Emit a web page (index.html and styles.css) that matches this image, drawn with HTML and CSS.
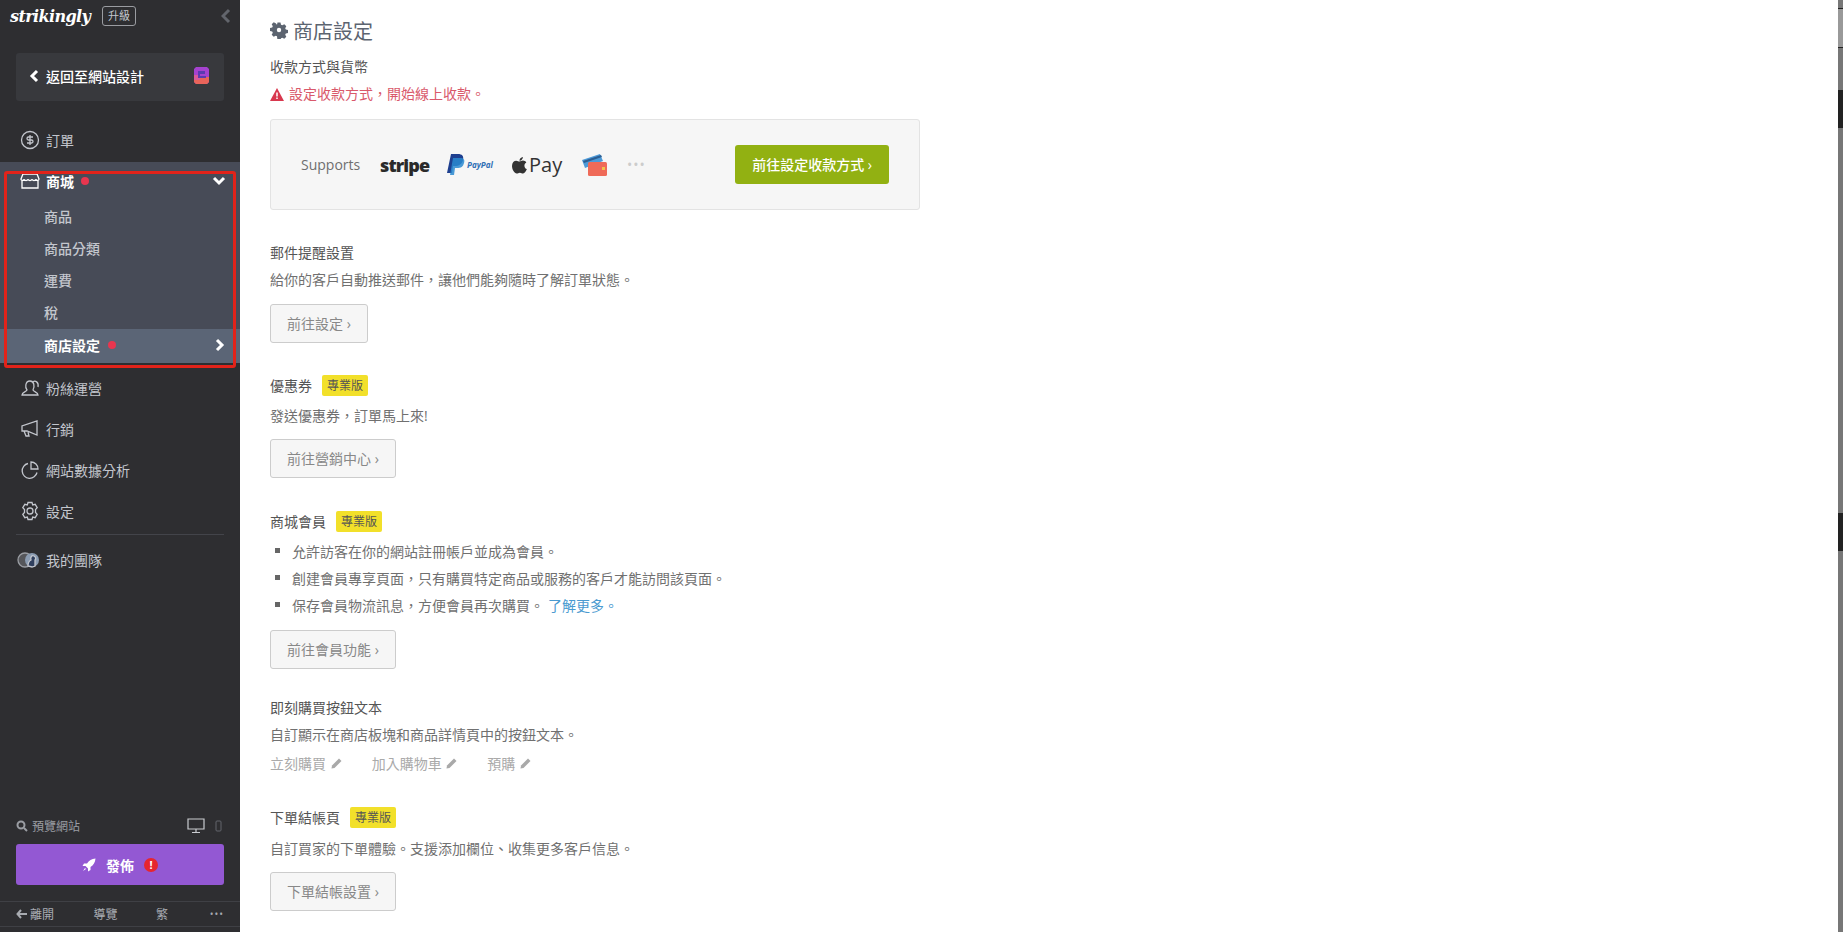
FILE: index.html
```html
<!DOCTYPE html>
<html lang="zh-Hant">
<head>
    <meta charset="UTF-8">
    <meta name="viewport" content="width=device-width, initial-scale=1.0">
    <title>商店設定</title>
    <link rel="stylesheet" href="styles.css">
</head>
<body>
    <div class="app">
        <aside class="sidebar">
            <div class="brand">
                <span class="logo">strikingly</span>
                <span class="upgrade">升級</span>
                <svg class="collapse" width="10" height="16" viewBox="0 0 10 16"><path d="M8 2L2 8l6 6" fill="none" stroke="#62656c" stroke-width="3"/></svg>
            </div>
            <div class="back">
                <svg width="10" height="14" viewBox="0 0 10 14"><path d="M8 2L3 7l5 5" fill="none" stroke="#fff" stroke-width="3"/></svg>
                <span class="back-label">返回至網站設計</span>
                <svg class="site-icon" width="15" height="17" viewBox="0 0 15 17"><path d="M0 2l2-2h11l2 2v13l-2 2H2l-2-2z" fill="#a542cf"/><path d="M0 10h15v5l-2 2H2l-2-2z" fill="#e8645a"/><path d="M0 8h6v5H0z" fill="#d8589a"/><path d="M4 4h7v3H6v2h6v2H4z" fill="#5a3bb0"/></svg>
            </div>

            <div class="nav-row first">
                <svg class="nav-icon" viewBox="0 0 20 20"><circle cx="10" cy="10" r="8.5"/><path d="M13 7H8.500a1.500 1.500 0 0 0 0 3h3a1.500 1.500 0 0 1 0 3H7M10 5v10"/></svg>
                <span>訂單</span>
            </div>

            <div class="store">
                <div class="highlight"></div>
                <div class="store-head">
                    <svg class="nav-icon" viewBox="0 0 20 20"><path d="M3 3h14l2 5c0 2-3 2-3 0 0 2-4 2-4 0 0 2-4 2-4 0 0 2-4 2-4 0 0 2-3 2-3 0zM2 10v7h16v-7"/></svg>
                    <span>商城</span>
                    <span class="dot"></span>
                    <svg class="chev" width="14" height="10" viewBox="0 0 14 10"><path d="M2 2l5 5 5-5" fill="none" stroke="#fff" stroke-width="3"/></svg>
                </div>
                <div class="sub-row">商品</div>
                <div class="sub-row">商品分類</div>
                <div class="sub-row">運費</div>
                <div class="sub-row">稅</div>
                <div class="sub-row current">
                    <span>商店設定</span>
                    <span class="dot"></span>
                    <svg class="chev" width="10" height="14" viewBox="0 0 10 14"><path d="M2 2l5 5-5 5" fill="none" stroke="#fff" stroke-width="3"/></svg>
                </div>
            </div>

            <div class="nav-list">
                <div class="nav-row">
                    <svg class="nav-icon" viewBox="0 0 20 20"><path d="M2 17c0-3 4-3 5-5-2-2-2-9 3-9 4 0 5 5 3 9 1 2 5 2 5 5zM13 4c2-2 6 0 5 5"/></svg>
                    <span>粉絲運營</span>
                </div>
                <div class="nav-row">
                    <svg class="nav-icon" viewBox="0 0 20 20"><path d="M17 2v14L7 12H2V7l15-5zM4 12l2 5h3l-1-4"/></svg>
                    <span>行銷</span>
                </div>
                <div class="nav-row">
                    <svg class="nav-icon" viewBox="0 0 20 20"><path d="M8 3.500a7.500 7.500 0 1 0 9 9M11 2a7 7 0 0 1 7 7h-7z"/></svg>
                    <span>網站數據分析</span>
                </div>
                <div class="nav-row">
                    <svg class="nav-icon" viewBox="0 0 20 20"><path d="M8 1.500h4l.7 2.500 2.500-.7 2 3.400L15.500 8.500v3l1.700 1.800-2 3.400-2.500-.7-.7 2.500H8l-.7-2.500-2.500.7-2-3.400 1.700-1.800v-3L2.800 6.700l2-3.400 2.500.7z"/><circle cx="10" cy="10" r="3"/></svg>
                    <span>設定</span>
                </div>
                <div class="nav-divider"></div>
                <div class="nav-row">
                    <svg class="nav-icon team" viewBox="0 0 24 20"><circle cx="8" cy="10" r="7" fill="#55565a" stroke="#9a9da3"/><circle cx="15" cy="10" r="7" fill="#8b9cb2" stroke="none"/><path d="M11 16c0-4 1-5 3-6-1-3 1-5 3-4 2 1 2 3 1 4v6l-3 1z" fill="#2f3f5e"/></svg>
                    <span>我的團隊</span>
                </div>
            </div>

            <div class="side-bottom">
                <div class="preview">
                    <svg width="12" height="12" viewBox="0 0 12 12"><circle cx="5" cy="5" r="3.500" fill="none" stroke="#9a9da3" stroke-width="2"/><path d="M8 8l3 3" stroke="#9a9da3" stroke-width="2"/></svg>
                    <span class="preview-label">預覽網站</span>
                    <svg class="desktop" width="18" height="16" viewBox="0 0 18 16"><path d="M1 1h16v10H1zM9 11v3M5 14.500h8" fill="none" stroke="#c9cbd0" stroke-width="1.200"/></svg>
                    <svg width="7" height="12" viewBox="0 0 7 12"><rect x="1" y="1" width="5" height="10" rx="1" fill="none" stroke="#62656c"/></svg>
                </div>
                <div class="publish">
                    <svg width="14" height="14" viewBox="0 0 14 14"><path d="M13.500.5c-4 .3-6.500 2-8.500 5H2L.5 8h3l2.500 2.500v3L8.500 12V9c3-2 4.700-4.500 5-8.500zM3 10l-2 3 3-2z" fill="#fff"/></svg>
                    <span>發佈</span>
                    <span class="alert">!</span>
                </div>
                <div class="side-footer">
                    <span class="leave"><svg width="11" height="10" viewBox="0 0 11 10"><path d="M5 1L1.500 5 5 9M2 5h9" fill="none" stroke="#a8abb1" stroke-width="2"/></svg>離開</span>
                    <span class="guide">導覽</span>
                    <span class="lang">繁</span>
                    <span class="more">•••</span>
                </div>
            </div>
        </aside>

        <main class="content">
            <h1 class="page-title">
                <svg width="18" height="18" viewBox="0 0 18 18"><path d="M7.500 1h3l.5 2.200 1.300.6 2-1.100 2 2-1.100 2 .6 1.300 2.200.5v3l-2.200.5-.6 1.300 1.100 2-2 2-2-1.100-1.300.6-.5 2.200h-3L7 14.800l-1.300-.6-2 1.100-2-2 1.100-2-.6-1.300L0 9.500v-3l2.200-.5.6-1.300-1.100-2 2-2 2 1.100L7 3.200z" fill="#5c6470" transform="translate(0 .5)"/><circle cx="9" cy="9" r="2.200" fill="#fff"/></svg>
                商店設定
            </h1>

            <section class="block first">
                <h2 class="block-head">收款方式與貨幣</h2>
                <p class="warn">
                    <svg width="14" height="13" viewBox="0 0 14 13"><path d="M7 0l7 13H0z" fill="#d8384e"/><path d="M7 4.500v4M7 9.500v1.500" stroke="#fff" stroke-width="1.500"/></svg>
                    設定收款方式，開始線上收款。
                </p>
                <div class="pay-panel">
                    <span class="supports">Supports</span>
                    <span class="stripe">stripe</span>
                    <span class="paypal">
                        <svg width="18" height="24" viewBox="0 0 18 24"><path d="M4 1h7c4 0 6 2 5 6-1 4-4 6-8 6H6l-1 7H0z" fill="#1e3f8f"/><path d="M6 5h7c4 0 5 2 4 5-1 4-3 5-7 5H8l-1 7H3z" fill="#2a8ad0" opacity=".85"/></svg>
                        <span class="paypal-word">PayPal</span>
                    </span>
                    <span class="applepay">
                        <svg width="15" height="18" viewBox="0 0 15 18"><path d="M11 1c0 2-2 4-3.500 3.700C7.300 3 9 1.200 11 1zM7.500 5.500c1 0 2-.9 3.500-.9 1.300 0 2.600.7 3.300 1.800-2.800 1.700-2.300 5.600.6 6.700-.8 2-2.300 4.400-3.800 4.400-1.200 0-1.700-.8-3.200-.8s-2 .8-3.200.8C2.500 17.500 0 13.500 0 10c0-3.400 2.100-5.300 4.200-5.300 1.400 0 2.400.8 3.300.8z" fill="#333"/></svg>
                        <span>Pay</span>
                    </span>
                    <svg class="wallet" width="26" height="24" viewBox="0 0 26 24"><path d="M1 7l18-6 3 7-18 7z" fill="#4d9ad8"/><path d="M2 8l18-6 1 2-18 6z" fill="#2c5f94"/><rect x="7" y="9" width="19" height="14" rx="1.500" fill="#ef6a58"/><rect x="21" y="14" width="3" height="3" fill="#f2c34a"/></svg>
                    <span class="pay-more">•••</span>
                    <a class="btn-green">前往設定收款方式 ›</a>
                </div>
            </section>

            <section class="block second">
                <h2 class="block-head">郵件提醒設置</h2>
                <p class="desc roomy">給你的客戶自動推送郵件，讓他們能夠隨時了解訂單狀態。</p>
                <a class="btn">前往設定 ›</a>
            </section>

            <section class="block">
                <h2 class="block-head with-badge">優惠券 <span class="pro">專業版</span></h2>
                <p class="desc">發送優惠券，訂單馬上來!</p>
                <a class="btn">前往營銷中心 ›</a>
            </section>

            <section class="block member">
                <h2 class="block-head with-badge">商城會員 <span class="pro">專業版</span></h2>
                <ul class="perks">
                    <li>允許訪客在你的網站註冊帳戶並成為會員。</li>
                    <li>創建會員專享頁面，只有購買特定商品或服務的客戶才能訪問該頁面。</li>
                    <li>保存會員物流訊息，方便會員再次購買。 <a class="more-link">了解更多。</a></li>
                </ul>
                <a class="btn">前往會員功能 ›</a>
            </section>

            <section class="block tight">
                <h2 class="block-head">即刻購買按鈕文本</h2>
                <p class="desc short">自訂顯示在商店板塊和商品詳情頁中的按鈕文本。</p>
                <div class="labels">
                    <span class="label-item">立刻購買 <svg width="11" height="11" viewBox="0 0 11 11"><path d="M8 .5L10.500 3 3.500 10 .5 10.500 1 7.500z" fill="#a9a9a9"/></svg></span>
                    <span class="label-item">加入購物車 <svg width="11" height="11" viewBox="0 0 11 11"><path d="M8 .5L10.500 3 3.500 10 .5 10.500 1 7.500z" fill="#a9a9a9"/></svg></span>
                    <span class="label-item">預購 <svg width="11" height="11" viewBox="0 0 11 11"><path d="M8 .5L10.500 3 3.500 10 .5 10.500 1 7.500z" fill="#a9a9a9"/></svg></span>
                </div>
            </section>

            <section class="block">
                <h2 class="block-head with-badge wide-gap">下單結帳頁 <span class="pro">專業版</span></h2>
                <p class="desc">自訂買家的下單體驗。支援添加欄位、收集更多客戶信息。</p>
                <a class="btn">下單結帳設置 ›</a>
            </section>
        </main>

        <div class="scrollbar">
            <div class="sb-top"></div>
            <div class="sb-mark"></div>
            <div class="sb-mark second"></div>
        </div>
    </div>
</body>
</html>
```

FILE: styles.css
```css
html, body {
    margin: 0;
    padding: 0;
    height: 100%;
    overflow: hidden;
}
body {
    font-family: "Open Sans", "Noto Sans CJK TC", sans-serif;
    font-size: 14px;
    color: #707070;
    background-color: white;
}
.app {
    display: flex;
    height: 932px;
}

/* sidebar */
.sidebar {
    width: 240px;
    flex: none;
    display: flex;
    flex-direction: column;
    background-color: #2e2e31;
    color: #c3c6cd;
}
.brand {
    display: flex;
    align-items: center;
    height: 30px;
    padding: 1px 9px 0 10px;
}
.logo {
    font-family: "DejaVu Serif", serif;
    font-style: italic;
    font-weight: bold;
    font-size: 16px;
    letter-spacing: -0.6px;
    color: white;
    width: 92px;
}
.upgrade {
    border: 1px solid #9a9ca1;
    border-radius: 3px;
    font-size: 11px;
    line-height: 18px;
    padding: 0 5px;
    color: #c3c6cd;
}
.collapse {
    margin-left: auto;
}
.back {
    display: flex;
    align-items: center;
    box-sizing: border-box;
    height: 48px;
    margin: 22px 16px 18px;
    padding: 0 15px 3px 13px;
    background-color: #38393d;
    border-radius: 3px;
    color: white;
    font-weight: 500;
}
.back-label {
    margin-left: 7px;
}
.site-icon {
    margin-left: auto;
}
.nav-row {
    display: flex;
    align-items: center;
    box-sizing: border-box;
    height: 41px;
    padding: 0 20px 2px;
}
.nav-row.first {
    height: 43px;
}
.nav-icon {
    width: 20px;
    height: 20px;
    margin-right: 6px;
    fill: none;
    stroke: #c3c6cd;
    stroke-width: 1.3;
    flex: none;
}
.nav-icon.team {
    width: 24px;
    margin: 0 5px 0 -3px;
}
.store {
    position: relative;
    background-color: #474b57;
    height: 201px;
}
.highlight {
    position: absolute;
    top: 9px;
    left: 4px;
    width: 226px;
    height: 191px;
    border: 3px solid #e2231a;
    border-radius: 3px;
}
.store-head {
    display: flex;
    align-items: center;
    box-sizing: border-box;
    height: 39px;
    padding: 0 14px 2px 20px;
    color: white;
    font-weight: 700;
}
.store-head .nav-icon {
    stroke: white;
}
.sub-row {
    display: flex;
    align-items: center;
    box-sizing: border-box;
    height: 32px;
    padding: 0 15px 2px 44px;
    font-weight: 500;
}
.sub-row.current {
    height: 34px;
    background-color: #5b6576;
    color: white;
    font-weight: 700;
}
.dot {
    width: 8px;
    height: 8px;
    border-radius: 50%;
    background-color: #e8364f;
    margin-left: 7px;
}
.sub-row .dot {
    margin-left: 8px;
}
.chev {
    margin-left: auto;
}
.nav-list {
    padding-top: 5px;
}
.nav-divider {
    height: 1px;
    margin: 2px 16px 5px;
    background-color: #43444a;
}
.side-bottom {
    margin-top: auto;
}
.preview {
    display: flex;
    align-items: center;
    gap: 4px;
    height: 20px;
    padding: 0 18px 0 16px;
    color: #9a9da3;
    font-size: 12px;
}
.preview-label {
    margin-right: auto;
}
.desktop {
    margin-right: 6px;
}
.publish {
    display: flex;
    align-items: center;
    justify-content: center;
    gap: 10px;
    height: 41px;
    margin: 8px 16px 16px;
    border-radius: 3px;
    background-color: #9358d3;
    color: white;
    font-weight: 700;
}
.alert {
    width: 14px;
    height: 14px;
    border-radius: 50%;
    background-color: #e6252f;
    font-size: 11px;
    line-height: 14px;
    text-align: center;
}
.side-footer {
    display: flex;
    align-items: center;
    height: 24px;
    margin-bottom: 5px;
    padding: 0 16px;
    border-top: 1px solid #3f4045;
    border-bottom: 1px solid #3f4045;
    font-size: 12px;
    color: #a8abb1;
}
.leave {
    display: flex;
    align-items: center;
    gap: 3px;
    width: 78px;
}
.guide {
    width: 63px;
}
.lang {
    width: 54px;
}
.more {
    font-size: 10px;
    letter-spacing: 1px;
}

/* main */
.content {
    flex: 1;
    padding: 17px 0 0 30px;
}
.page-title {
    display: flex;
    align-items: center;
    gap: 5px;
    margin: 0;
    height: 26px;
    font-size: 20px;
    font-weight: 400;
    color: #5c6470;
}
.block {
    margin-top: 32px;
}
.block.first {
    margin-top: 14px;
}
.block.second,
.block.member {
    margin-top: 33px;
}
.block.tight {
    margin-top: 29px;
    padding-bottom: 1px;
}
.block-head {
    display: flex;
    align-items: center;
    margin: 0 0 7px;
    min-height: 20px;
    font-size: 14px;
    line-height: 20px;
    font-weight: 400;
    color: #555;
}
.block-head.with-badge {
    margin-bottom: 10px;
}
.block-head.wide-gap {
    margin-bottom: 11px;
}
.pro {
    margin-left: 10px;
    padding: 0 5px;
    background-color: #f2e02a;
    border-radius: 2px;
    font-size: 12px;
    line-height: 21px;
    color: #555;
}
.warn {
    display: flex;
    align-items: center;
    gap: 5px;
    margin: 0 0 15px;
    line-height: 20px;
    color: #d9596b;
}
.desc {
    margin: 0 0 13px;
    line-height: 20px;
}
.desc.roomy {
    margin-bottom: 14px;
}
.desc.short {
    margin-bottom: 9px;
}
.pay-panel {
    display: flex;
    align-items: center;
    width: 588px;
    height: 89px;
    padding: 0 30px;
    background-color: #f6f6f6;
    border: 1px solid #e3e3e3;
    border-radius: 3px;
}
.supports {
    width: 79px;
    color: #6f6f6f;
}
.stripe {
    width: 67px;
    font-size: 18px;
    font-weight: 800;
    letter-spacing: -0.9px;
    color: #2a2a2a;
}
.paypal {
    display: flex;
    align-items: center;
    gap: 2px;
    width: 65px;
}
.paypal-word {
    font-size: 8px;
    font-weight: 700;
    font-style: italic;
    color: #2f6fb5;
}
.applepay {
    display: flex;
    align-items: center;
    gap: 2px;
    width: 69px;
    font-size: 20px;
    color: #333;
}
.wallet {
    margin-right: 20px;
}
.pay-more {
    font-size: 14px;
    letter-spacing: 1px;
    color: #ccc;
}
.btn-green {
    margin-left: auto;
    padding: 0 17px;
    line-height: 39px;
    background-color: #92b112;
    border-radius: 3px;
    color: white;
    font-weight: 500;
}
.btn {
    display: inline-block;
    padding: 0 16px;
    line-height: 37px;
    background-color: #f6f6f6;
    border: 1px solid #ccc;
    border-radius: 3px;
    color: #888;
}
.perks {
    margin: -5px 0 12px;
    padding: 0;
    list-style: none;
}
.perks li {
    display: flex;
    align-items: center;
    gap: 4px;
    height: 27px;
    padding-left: 22px;
    position: relative;
}
.perks li::before {
    content: "";
    position: absolute;
    left: 5px;
    top: 11px;
    width: 5px;
    height: 5px;
    background-color: #666;
}
.more-link {
    color: #4a9ad0;
}
.labels {
    display: flex;
    gap: 30px;
    color: #aaa;
    line-height: 20px;
}
.label-item svg {
    margin-left: 1px;
}

/* scrollbar strip on the right edge */
.scrollbar {
    width: 5px;
    flex: none;
    background-color: #777;
}
.sb-top {
    height: 38px;
    margin-top: 8px;
    background-color: #999;
    border-top: 1px solid #222;
    border-bottom: 1px solid #222;
}
.sb-mark {
    height: 38px;
    margin-top: 42px;
    background-color: #222;
}
.sb-mark.second {
    margin-top: 385px;
}
```
